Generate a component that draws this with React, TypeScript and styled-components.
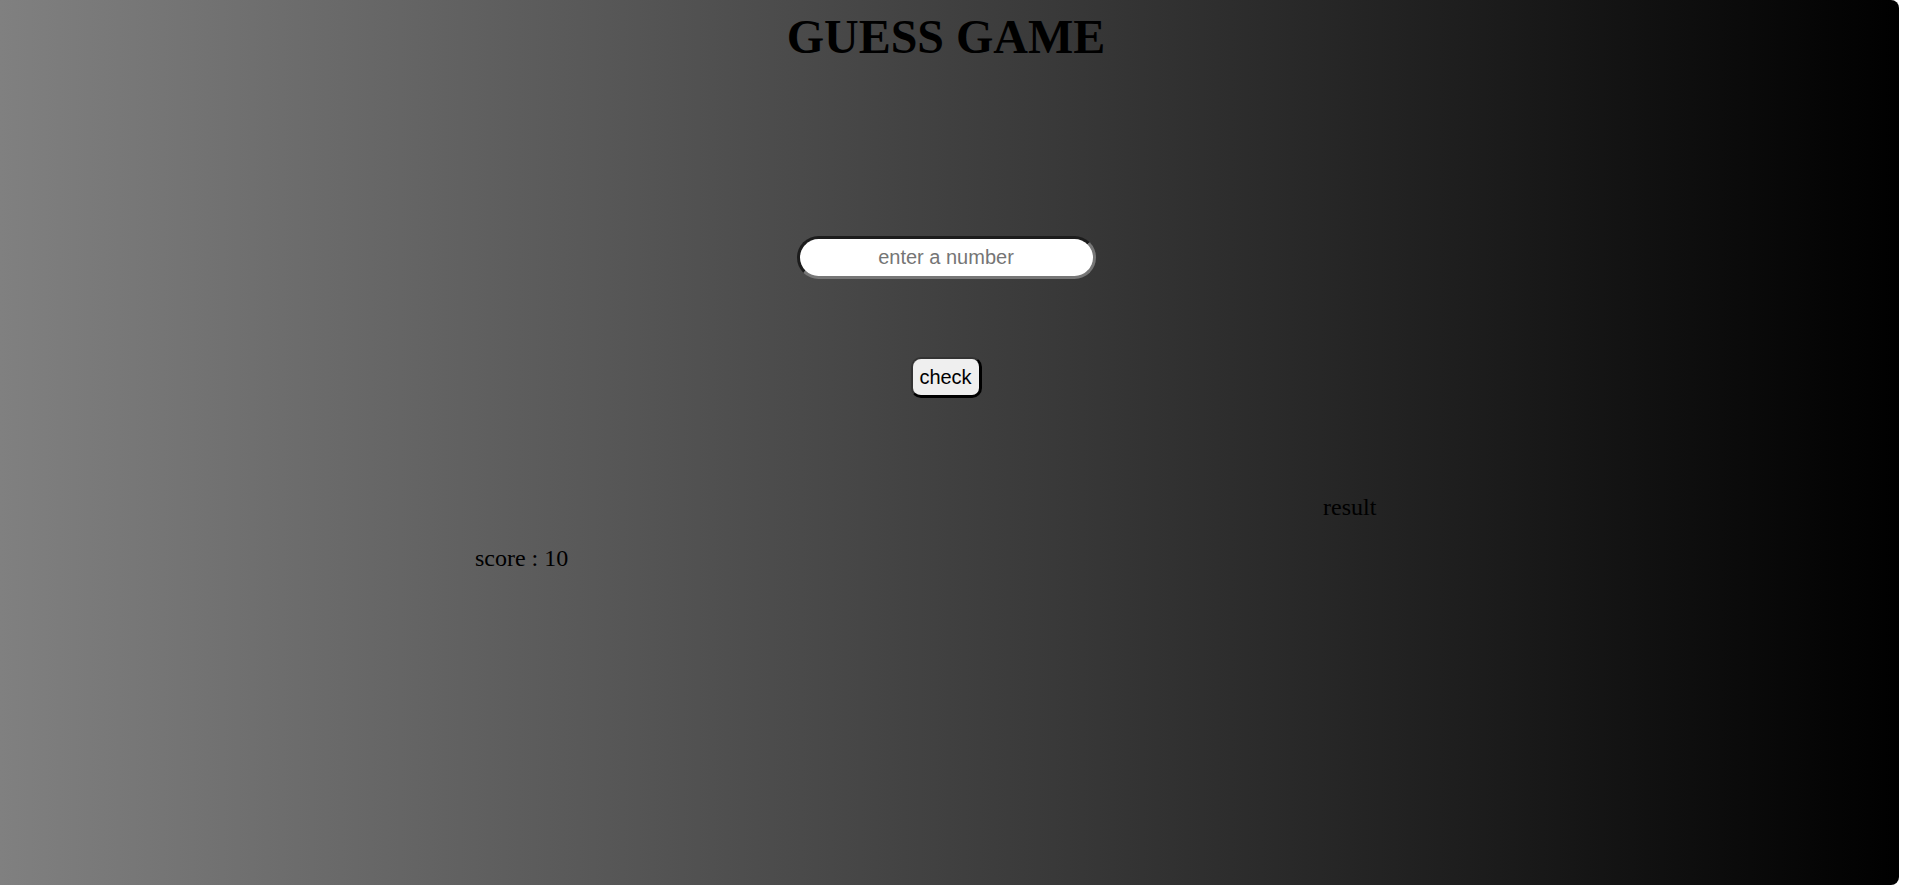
import React from "react";
import styled, { createGlobalStyle } from "styled-components";

const GlobalStyle = createGlobalStyle`
  html, body {
    margin: 0;
    padding: 0;
    background: #ffffff;
  }
  body {
    font-family: "Liberation Serif", "Times New Roman", serif;
  }
`;

const Page = styled.main`
  box-sizing: border-box;
  width: 1899px;
  min-height: 885px;
  padding: 9px 7px 0 0;
  background: linear-gradient(to right, #808080, #000000);
  border-radius: 0 8px 8px 0;
  display: flex;
  flex-direction: column;
`;

const Title = styled.h1`
  margin: 0;
  text-align: center;
  font-family: "Liberation Serif", "Times New Roman", serif;
  font-size: 48px;
  font-weight: bold;
  line-height: normal;
  color: #000;
`;

const Form = styled.div`
  display: flex;
  flex-direction: column;
  align-items: center;
  margin-top: 172px;
`;

const NumberInput = styled.input`
  box-sizing: border-box;
  width: 299px;
  height: 43px;
  border-width: 3px;
  border-style: solid;
  border-color: #1c1c1c #767676 #767676 #1c1c1c;
  border-radius: 22px;
  background: #fff;
  font-family: "Liberation Sans", Arial, sans-serif;
  font-size: 20px;
  text-align: center;
  color: #000;
  outline: none;
  &::placeholder {
    color: #757575;
  }
`;

const CheckButton = styled.button`
  box-sizing: border-box;
  margin-top: 78px;
  width: 71px;
  height: 41px;
  padding: 0;
  border-width: 2px 3px 3px 2px;
  border-style: solid;
  border-color: #333 #000 #000 #333;
  border-radius: 10px;
  background: #efefef;
  font-family: "Liberation Sans", Arial, sans-serif;
  font-size: 20px;
  color: #000;
  cursor: pointer;
`;

const Line = styled.p<{ $indent: string }>`
  margin: 24px 0 0 ${(p) => p.$indent};
  font-size: 24px;
  line-height: normal;
  color: #000;
`;

const Results = styled.div`
  margin-top: 72px;
`;

export default function App() {
  return (
    <>
      <GlobalStyle />
      <Page>
        <Title>GUESS GAME</Title>
        <Form>
          <NumberInput type="text" placeholder="enter a number" />
          <CheckButton>check</CheckButton>
        </Form>
        <Results>
          <Line $indent="69.93%">result</Line>
          <Line $indent="25.1%">score : 10</Line>
        </Results>
      </Page>
    </>
  );
}
